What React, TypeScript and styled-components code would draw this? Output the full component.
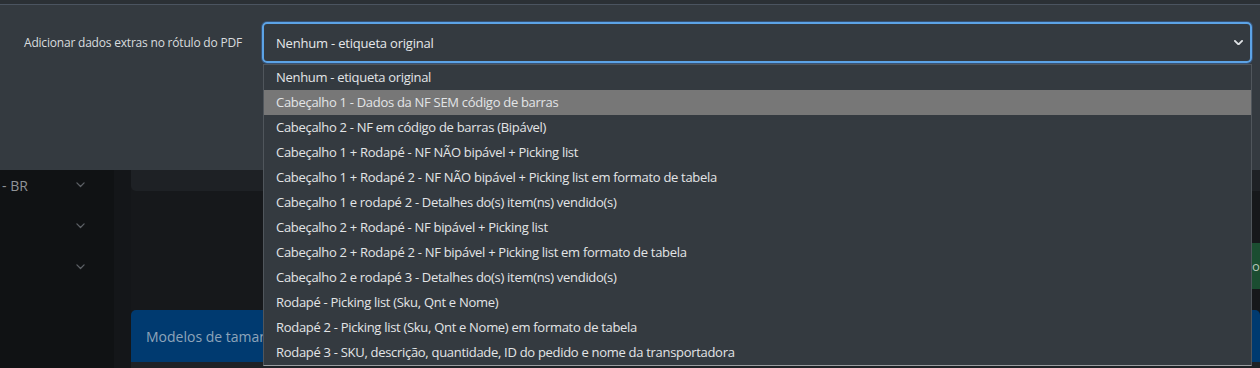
import styled, { createGlobalStyle } from 'styled-components';

const GlobalStyle = createGlobalStyle`
  html, body {
    margin: 0;
    padding: 0;
    background: #15171a;
    font-family: "Open Sans", "Liberation Sans", sans-serif;
    overflow: hidden;
  }
`;

const OPTIONS = [
  'Nenhum - etiqueta original',
  'Cabeçalho 1 - Dados da NF SEM código de barras',
  'Cabeçalho 2 - NF em código de barras (Bipável)',
  'Cabeçalho 1 + Rodapé - NF NÃO bipável + Picking list',
  'Cabeçalho 1 + Rodapé 2 - NF NÃO bipável + Picking list em formato de tabela',
  'Cabeçalho 1 e rodapé 2 - Detalhes do(s) item(ns) vendido(s)',
  'Cabeçalho 2 + Rodapé - NF bipável + Picking list',
  'Cabeçalho 2 + Rodapé 2 - NF bipável + Picking list em formato de tabela',
  'Cabeçalho 2 e rodapé 3 - Detalhes do(s) item(ns) vendido(s)',
  'Rodapé - Picking list (Sku, Qnt e Nome)',
  'Rodapé 2 - Picking list (Sku, Qnt e Nome) em formato de tabela',
  'Rodapé 3 - SKU, descrição, quantidade, ID do pedido e nome da transportadora',
];

const Page = styled.div`
  position: relative;
  width: 1260px;
  height: 368px;
  overflow: hidden;
`;

const TopBar = styled.div`
  height: 4px;
  background: #2b3035;
  border-bottom: 1px solid #4b5460;
`;

const SettingsPanel = styled.section`
  background: #343a40;
  height: 165px;
  padding: 17px 8px 0 24px;
  box-sizing: border-box;
  display: flex;
  align-items: flex-start;
  gap: 20px;
`;

const FieldLabel = styled.label`
  flex: 0 0 218px;
  color: #d9dcdf;
  font-size: 12px;
  letter-spacing: -0.2px;
  line-height: 41px;
  white-space: nowrap;
`;

const SelectWrap = styled.div`
  position: relative;
  flex: 1;
`;

const SelectBox = styled.div`
  height: 41px;
  box-sizing: border-box;
  border: 2px solid #5ca3e6;
  border-radius: 5px;
  box-shadow: 0 0 0 1px rgba(60, 130, 220, 0.35);
  padding: 0 7px 0 12px;
  display: flex;
  align-items: center;
  justify-content: space-between;
  color: #e6e8ea;
  font-size: 13px;
  letter-spacing: -0.2px;
`;

const Listbox = styled.ul`
  position: absolute;
  top: 42px;
  left: 1px;
  right: 0;
  margin: 0;
  padding: 0;
  list-style: none;
  background: #343a40;
  border: 1px solid #50565c;
  border-bottom-color: #9a9da0;
  z-index: 10;
`;

const OptionItem = styled.li<{ $active?: boolean }>`
  height: 25px;
  line-height: 25px;
  padding-left: 12px;
  font-size: 13px;
  letter-spacing: -0.3px;
  color: #e3e5e7;
  background: ${(p) => (p.$active ? '#777777' : 'transparent')};
  white-space: nowrap;
`;

const Body = styled.div`
  display: flex;
  height: 199px;
`;

const Sidebar = styled.aside`
  width: 114px;
  background: #101214;
  border-right: 17px solid #141619;
  display: flex;
  flex-direction: column;
  padding-top: 5px;
  gap: 21px;
`;

const NavItem = styled.div`
  height: 20px;
  display: flex;
  align-items: center;
  justify-content: space-between;
  padding: 0 29px 0 2px;
  color: #8f9397;
  font-size: 14px;
`;

const Main = styled.main`
  flex: 1;
  background: #16181b;
  display: flex;
  flex-direction: column;
`;

const CardTail = styled.div`
  height: 21px;
  background: #1e2125;
  border-radius: 0 0 0 5px;
`;

const ActionRow = styled.div`
  height: 119px;
  box-sizing: border-box;
  display: flex;
  justify-content: flex-end;
  align-items: flex-start;
  padding-top: 52px;
`;

const GreenButton = styled.div`
  width: 60px;
  height: 46px;
  margin-right: -52px;
  background: #1b4d31;
  color: #b8c4bb;
  font-size: 13px;
  display: flex;
  align-items: center;
  padding-left: 1px;
`;

const BlueHeader = styled.div`
  height: 52px;
  background: #003a70;
  border-radius: 5px 5px 0 0;
  padding-left: 15px;
  display: flex;
  align-items: center;
  color: #8ea4ba;
  font-size: 14px;
`;

const CardBody = styled.div`
  flex: 1;
  background: #1e2226;
`;

const Chevron = ({ color, size, weight }: { color: string; size: number; weight: number }) => (
  <svg width={size} height={size * 0.6} viewBox="0 0 10 6" fill="none">
    <path d="M1 1l4 4 4-4" stroke={color} strokeWidth={weight} strokeLinecap="round" strokeLinejoin="round" />
  </svg>
);

export default function App() {
  return (
    <Page>
      <GlobalStyle />
      <TopBar />
      <SettingsPanel>
        <FieldLabel>Adicionar dados extras no rótulo do PDF</FieldLabel>
        <SelectWrap>
          <SelectBox>
            <span>Nenhum - etiqueta original</span>
            <Chevron color="#dfe2e5" size={9} weight={2} />
          </SelectBox>
          <Listbox>
            {OPTIONS.map((opt, i) => (
              <OptionItem key={opt} $active={i === 1}>
                {opt}
              </OptionItem>
            ))}
          </Listbox>
        </SelectWrap>
      </SettingsPanel>
      <Body>
        <Sidebar>
          <NavItem>
            <span>- BR</span>
            <Chevron color="#5d6166" size={9} weight={1.4} />
          </NavItem>
          <NavItem>
            <span />
            <Chevron color="#5d6166" size={9} weight={1.4} />
          </NavItem>
          <NavItem>
            <span />
            <Chevron color="#5d6166" size={9} weight={1.4} />
          </NavItem>
        </Sidebar>
        <Main>
          <CardTail />
          <ActionRow>
            <GreenButton>o</GreenButton>
          </ActionRow>
          <BlueHeader>Modelos de tamanho de etiqueta</BlueHeader>
          <CardBody />
        </Main>
      </Body>
    </Page>
  );
}
